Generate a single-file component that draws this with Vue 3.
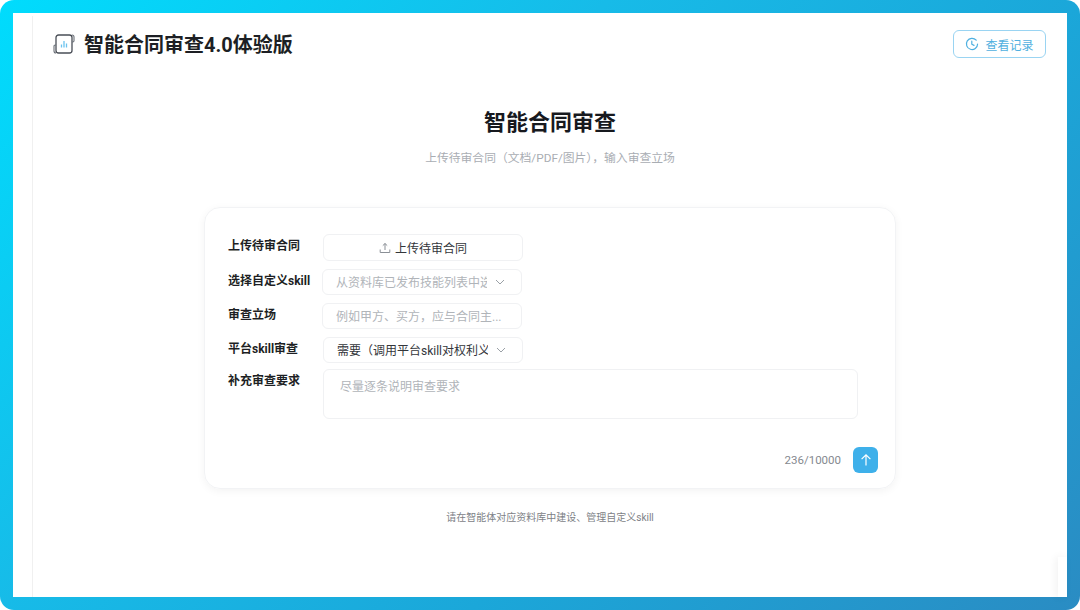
<script setup>
const title = '智能合同审查'
</script>

<template>
  <div class="frame">
    <div class="sheet">
      <div class="rail"></div>
      <div class="page">
        <header class="top">
          <div class="brand">
            <svg class="logo" width="22" height="22" viewBox="0 0 22 22" fill="none">
              <rect x="3" y="2" width="16" height="18" rx="2.5" stroke="#4a4f57" stroke-width="1.3" fill="#fff" />
              <path d="M3 12H2.2C1.5 12 1 12.6 1 13.2V18C1 19.2 1.9 20 3 20" stroke="#6b7078" stroke-width="1.1" />
              <path d="M19 9H19.8C20.5 9 21 8.4 21 7.8V4C21 2.9 20.1 2 19 2" stroke="#6b7078" stroke-width="1.1" />
              <path d="M8.5 11.5V14.5M11 8V14.5M13.5 10.5V14.5" stroke="#6cc3ee" stroke-width="1.3" />
            </svg>
            <span class="brand__name">{{ title }}4.0体验版</span>
          </div>
          <button class="history">
            <svg width="14" height="14" viewBox="0 0 14 14" fill="none" stroke="#4fb0e0" stroke-width="1.2">
              <path d="M11.2 3.2A5.6 5.6 0 1 0 12.6 7" stroke-linecap="round" />
              <path d="M6.8 4.2V7.2L9 8.4" stroke-linecap="round" />
            </svg>
            <span>查看记录</span>
          </button>
        </header>

        <main class="main">
          <h1 class="main__title">{{ title }}</h1>
          <p class="main__sub">上传待审合同（文档/PDF/图片），输入审查立场</p>

          <section class="card">
            <div class="row">
              <div class="row__label">上传待审合同</div>
              <div class="control control--upload">
                <svg width="12" height="12" viewBox="0 0 12 12" fill="none" stroke="#8a8f96" stroke-width="1">
                  <path d="M6 8V1.5M3.8 3.6L6 1.5L8.2 3.6M1.2 7.5V10.5H10.8V7.5" />
                </svg>
                <span>上传待审合同</span>
              </div>
            </div>
            <div class="row">
              <div class="row__label">选择自定义skill</div>
              <div class="control control--select control--shift">
                <span class="control__text control__text--muted">从资料库已发布技能列表中选择</span>
                <svg width="12" height="12" viewBox="0 0 12 12" fill="none" stroke="#9aa0a6" stroke-width="1">
                  <path d="M2 4L6 8L10 4" />
                </svg>
              </div>
            </div>
            <div class="row">
              <div class="row__label">审查立场</div>
              <div class="control control--shift">
                <span class="control__text control__text--muted">例如甲方、买方，应与合同主...</span>
              </div>
            </div>
            <div class="row row--tight">
              <div class="row__label">平台skill审查</div>
              <div class="control control--select">
                <span class="control__text">需要（调用平台skill对权利义务审查）</span>
                <svg width="12" height="12" viewBox="0 0 12 12" fill="none" stroke="#9aa0a6" stroke-width="1">
                  <path d="M2 4L6 8L10 4" />
                </svg>
              </div>
            </div>
            <div class="row">
              <div class="row__label">补充审查要求</div>
              <div class="control control--area">尽量逐条说明审查要求</div>
            </div>

            <div class="card__foot">
              <span class="count">236/10000</span>
              <button class="send">
                <svg width="14" height="14" viewBox="0 0 14 14" fill="none" stroke="#fff" stroke-width="1.2">
                  <path d="M7 12.5V1.8M2.6 6.2L7 1.8L11.4 6.2" />
                </svg>
              </button>
            </div>
          </section>

          <p class="note">请在智能体对应资料库中建设、管理自定义skill</p>
        </main>
      </div>
      <div class="corner"></div>
    </div>
  </div>
</template>

<style>
html,
body {
  margin: 0;
  background: #fff;
  overflow: hidden;
}
</style>

<style scoped>
.frame {
  width: 1080px;
  height: 610px;
  box-sizing: border-box;
  padding: 13px;
  border-radius: 14px;
  background: linear-gradient(135deg, #00dcfd 0%, #17bbe8 36%, #1ba7d9 64%, #2a8cc3 100%);
  font-family: "Roboto", "Noto Sans CJK SC", sans-serif;
}

.sheet {
  position: relative;
  display: flex;
  height: 100%;
  background: #fff;
}

.rail {
  width: 19px;
  flex: none;
  margin-top: 3px;
  border-right: 1px solid #f0f0f0;
}

.page {
  flex: 1;
  min-width: 0;
}

.top {
  display: flex;
  align-items: center;
  justify-content: space-between;
  padding: 17px 21px 0 20px;
}

.brand {
  display: flex;
  align-items: center;
  gap: 9px;
}

.brand__name {
  position: relative;
  top: 1px;
  font-size: 20px;
  font-weight: 700;
  line-height: 28px;
  color: #1d1f24;
}

.history {
  display: flex;
  align-items: center;
  justify-content: center;
  gap: 6px;
  width: 93px;
  height: 28px;
  padding: 0;
  border: 1px solid #9ad4f2;
  border-radius: 6px;
  background: #fff;
  font: inherit;
  font-size: 12px;
  color: #4fb0e0;
}

.main {
  display: flex;
  flex-direction: column;
  align-items: center;
}

.main__title {
  margin: 49px 0 0;
  font-size: 22px;
  font-weight: 700;
  line-height: 32px;
  color: #17191e;
}

.main__sub {
  margin: 11px 0 0;
  font-size: 11.8px;
  line-height: 16px;
  color: #a9adb3;
}

.card {
  box-sizing: border-box;
  width: 692px;
  height: 282px;
  margin-top: 41px;
  padding: 26px 17px 0 23px;
  border: 1px solid #f2f3f5;
  border-radius: 16px;
  box-shadow: 0 2px 8px rgba(0, 0, 0, 0.05);
}

.row {
  display: flex;
  margin-bottom: 8px;
}

.row--tight {
  margin-bottom: 6px;
}

.row__label {
  flex: none;
  width: 95px;
  padding-top: 4px;
  font-size: 12px;
  font-weight: 700;
  line-height: 16px;
  color: #1d1f24;
}

.control {
  box-sizing: border-box;
  display: flex;
  align-items: center;
  width: 200px;
  height: 26px;
  padding: 0 13px;
  border: 1px solid #f0f1f3;
  border-radius: 6px;
  font-size: 12px;
  color: #33363b;
}

.control--shift {
  margin-left: -1px;
}

.control--upload {
  justify-content: center;
  gap: 4px;
  height: 27px;
}

.control--select {
  gap: 7px;
  padding-right: 15px;
}

.control--select svg {
  flex: none;
}

.control--area {
  align-items: flex-start;
  width: 535px;
  height: 50px;
  padding: 9px 16px;
  line-height: 16px;
  color: #b0b4b9;
}

.control__text {
  flex: 1;
  min-width: 0;
  padding-bottom: 2px;
  overflow: hidden;
  white-space: nowrap;
}

.control__text--muted {
  color: #b0b4b9;
}

.card__foot {
  display: flex;
  align-items: center;
  justify-content: flex-end;
  gap: 12px;
  margin-top: 28px;
}

.count {
  font-size: 11.5px;
  color: #85898f;
}

.send {
  display: flex;
  align-items: center;
  justify-content: center;
  width: 25px;
  height: 26px;
  padding: 0;
  border: 0;
  border-radius: 6px;
  background: #3eb0ea;
}

.note {
  margin: 22px 0 0;
  font-size: 10px;
  line-height: 14px;
  color: #7d8186;
}

/* faint floating edge in the lower right */
.corner {
  position: absolute;
  right: 0;
  bottom: 0;
  width: 9px;
  height: 40px;
  background: #fff;
  box-shadow: -2px 0 8px rgba(0, 0, 0, 0.06);
}
</style>
